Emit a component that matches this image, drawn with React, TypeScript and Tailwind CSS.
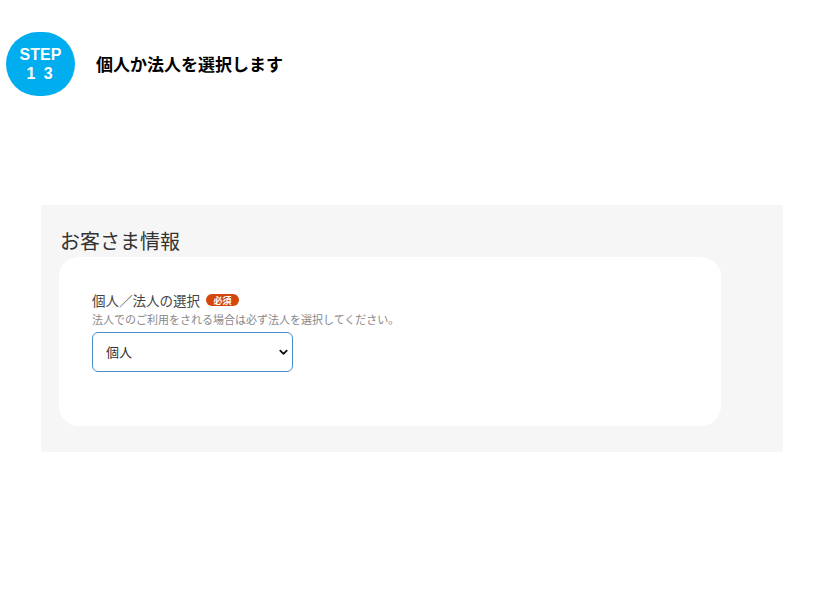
const JP = "font-['Noto_Sans_CJK_JP','Noto_Sans',sans-serif]";

export default function App() {
  return (
    <div className={`min-h-[604px] w-[823px] bg-white ${JP}`}>
      <div className="flex items-center pl-[6px] pt-[32px]">
        <div className="flex h-[64px] w-[69px] flex-col items-center justify-center rounded-full bg-[#00aeef] pb-[1px] font-['Liberation_Sans',sans-serif] font-bold text-white">
          <span className="text-[16px] leading-[19px]">STEP</span>
          <span className="text-[16px] leading-[19px] tracking-[2px]">1 3</span>
        </div>
        <h1 className="ml-[21px] text-[17px] font-bold text-black">
          個人か法人を選択します
        </h1>
      </div>

      <section className="ml-[41px] mt-[109px] w-[742px] bg-[#f6f6f6] pb-[26px] pt-[22px]">
        <h2 className="pl-[19px] text-[20px] leading-[28px] text-[#333]">
          お客さま情報
        </h2>
        <div className="ml-[18px] mt-[2px] h-[169px] w-[662px] rounded-[20px] bg-white px-[33px] pt-[33px]">
          <div className="flex items-center gap-[6px]">
            <span className="text-[13.5px] leading-[20px] text-[#444]">
              個人／法人の選択
            </span>
            <span className="flex h-[12px] w-[33px] items-center justify-center rounded-full bg-[#d4460c] text-[9px] font-bold leading-none text-white">
              必須
            </span>
          </div>
          <p className="mt-[1px] text-[11px] leading-[16px] text-[#888]">
            法人でのご利用をされる場合は必ず法人を選択してください。
          </p>
          <div className="relative mt-[5px] w-[201px]">
            <select
              defaultValue="個人"
              className="h-[40px] w-full appearance-none rounded-[6px] border border-[#4a8bc2] bg-white pl-[13px] text-[13px] text-[#333] outline-none"
            >
              <option>個人</option>
              <option>法人</option>
            </select>
            <svg
              className="pointer-events-none absolute right-[4px] top-1/2 -translate-y-1/2"
              width="11"
              height="11"
              viewBox="0 0 24 24"
              fill="none"
              stroke="#111"
              strokeWidth="4"
              strokeLinecap="round"
              strokeLinejoin="round"
            >
              <path d="M5 9l7 7 7-7" />
            </svg>
          </div>
        </div>
      </section>
    </div>
  );
}
